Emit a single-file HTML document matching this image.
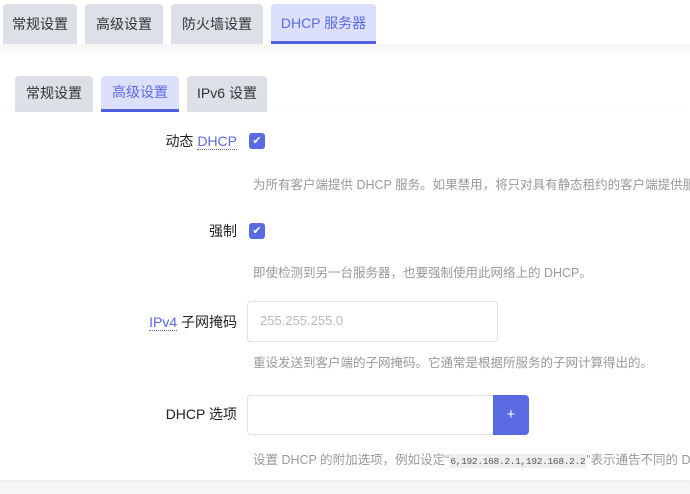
<!DOCTYPE html>
<html><head><meta charset="utf-8"><style>
body{margin:0;width:690px;height:494px;overflow:hidden;background:#f6f6f8;font-family:"Liberation Sans","Noto Sans CJK SC",sans-serif;position:relative}
.top{position:absolute;left:0;top:0;width:690px;height:44px;background:#fff}
.mid{position:absolute;left:0;top:44px;width:690px;height:68px;background:linear-gradient(#f3f3f5,#fff 12px)}
.tab{position:absolute;background:#dde1e7;color:#333;font-size:14px;text-align:center;border-radius:4px 4px 0 0;box-sizing:border-box}
.act{background:#dde0fd;color:#5a6ae0;border-bottom:3px solid #5060e0}
.panel{position:absolute;left:0;top:112px;width:690px;height:368px;background:#fff;box-shadow:0 1px 3px rgba(0,0,0,.06)}
.lbl{position:absolute;right:453px;font-size:14px;color:#222;white-space:nowrap}
.lbl a{color:#5a6ae0;border-bottom:1px dotted #5a6ae0;text-decoration:none}
.cb{position:absolute;left:249px;width:16px;height:16px;background:#5a6ae0;border-radius:3px;color:#fff;font-size:11px;text-align:center;line-height:16px}
.desc{position:absolute;left:253px;width:437px;overflow:hidden;font-size:12.5px;color:#999;white-space:nowrap}
.inp{position:absolute;left:247px;border:1px solid #dcdfe6;border-radius:4px;box-sizing:border-box;background:#fff}
code{font-family:"Liberation Mono",monospace;font-size:9.5px;background:#eee;color:#555;padding:2px 1px;letter-spacing:-0.3px}
</style></head><body>
<div class="top"></div><div class="mid"></div>
<div class="tab" style="left:3px;top:4px;width:74px;height:40px;line-height:40px">常规设置</div>
<div class="tab" style="left:85px;top:4px;width:78px;height:40px;line-height:40px">高级设置</div>
<div class="tab" style="left:171px;top:4px;width:92px;height:40px;line-height:40px">防火墙设置</div>
<div class="tab act" style="left:271px;top:4px;width:105px;height:40px;line-height:38px">DHCP 服务器</div>
<div class="tab" style="left:15px;top:76px;width:78px;height:36px;line-height:34px">常规设置</div>
<div class="tab act" style="left:101px;top:76px;width:78px;height:36px;line-height:32px">高级设置</div>
<div class="tab" style="left:187px;top:76px;width:80px;height:36px;line-height:34px">IPv6 设置</div>
<div class="panel"></div>
<div class="lbl" style="top:131px">动态 <a>DHCP</a></div>
<div class="cb" style="top:133px">✔</div>
<div class="desc" style="top:174px">为所有客户端提供 DHCP 服务。如果禁用，将只对具有静态租约的客户端提供服务。</div>
<div class="lbl" style="top:221px">强制</div>
<div class="cb" style="top:223px">✔</div>
<div class="desc" style="top:262px">即使检测到另一台服务器，也要强制使用此网络上的 DHCP。</div>
<div class="lbl" style="top:312px"><a>IPv4</a> 子网掩码</div>
<div class="inp" style="top:301px;width:251px;height:41px;padding:11px 12px;font-size:13px;color:#bbb">255.255.255.0</div>
<div class="desc" style="top:352px">重设发送到客户端的子网掩码。它通常是根据所服务的子网计算得出的。</div>
<div class="lbl" style="top:404px">DHCP 选项</div>
<div class="inp" style="top:395px;width:247px;height:40px"></div>
<div style="position:absolute;left:493px;top:395px;width:36px;height:40px;background:#5a6ae0;border-radius:0 4px 4px 0;color:#fff;text-align:center;line-height:40px;font-size:15px">+</div>
<div class="desc" style="top:449px">设置 DHCP 的附加选项，例如设定“<code>6,192.168.2.1,192.168.2.2</code>”表示通告不同的 DNS 服务器给客户端。</div>
</body></html>
